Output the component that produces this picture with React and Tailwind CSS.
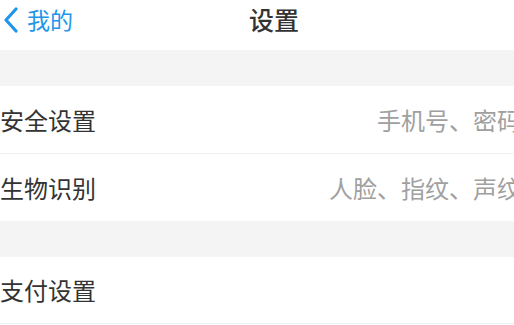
export default function App() {
  const font = { fontFamily: '"Noto Sans CJK SC", "Noto Sans", sans-serif' };
  return (
    <div className="w-[514px] h-[325px] overflow-hidden bg-white" style={font}>
      <div className="relative h-[50px] bg-white">
        <div className="absolute left-[2px] top-[5px] flex items-center">
          <svg width="18" height="28" viewBox="0 0 18 28" className="mr-[7px]">
            <path d="M14 4 L4 15 L14 26" fill="none" stroke="#2196e8" strokeWidth="3.2" strokeLinecap="round" strokeLinejoin="round" />
          </svg>
          <span className="text-[23px] leading-[28px] text-[#2196e8]">我的</span>
        </div>
        <div className="absolute left-[249px] top-[4px] text-[25px] leading-[30px] text-[#333] font-medium">设置</div>
      </div>
      <div className="h-[36px] bg-[#f4f4f4]" />
      <div className="border-b border-[#f0f0f0] h-[68px] flex items-center justify-between overflow-hidden">
        <span className="text-[24px] text-[#333] whitespace-nowrap">安全设置</span>
        <span className="text-[24px] text-[#a0a0a0] whitespace-nowrap -mr-[7px]">手机号、密码</span>
      </div>
      <div className="h-[67px] flex items-center justify-between overflow-hidden">
        <span className="text-[24px] text-[#333] whitespace-nowrap">生物识别</span>
        <span className="text-[24px] text-[#a0a0a0] whitespace-nowrap -mr-[7px]">人脸、指纹、声纹</span>
      </div>
      <div className="h-[36px] bg-[#f4f4f4]" />
      <div className="border-b border-[#f0f0f0] h-[67px] flex items-center overflow-hidden">
        <span className="text-[24px] text-[#333] whitespace-nowrap">支付设置</span>
      </div>
    </div>
  );
}
